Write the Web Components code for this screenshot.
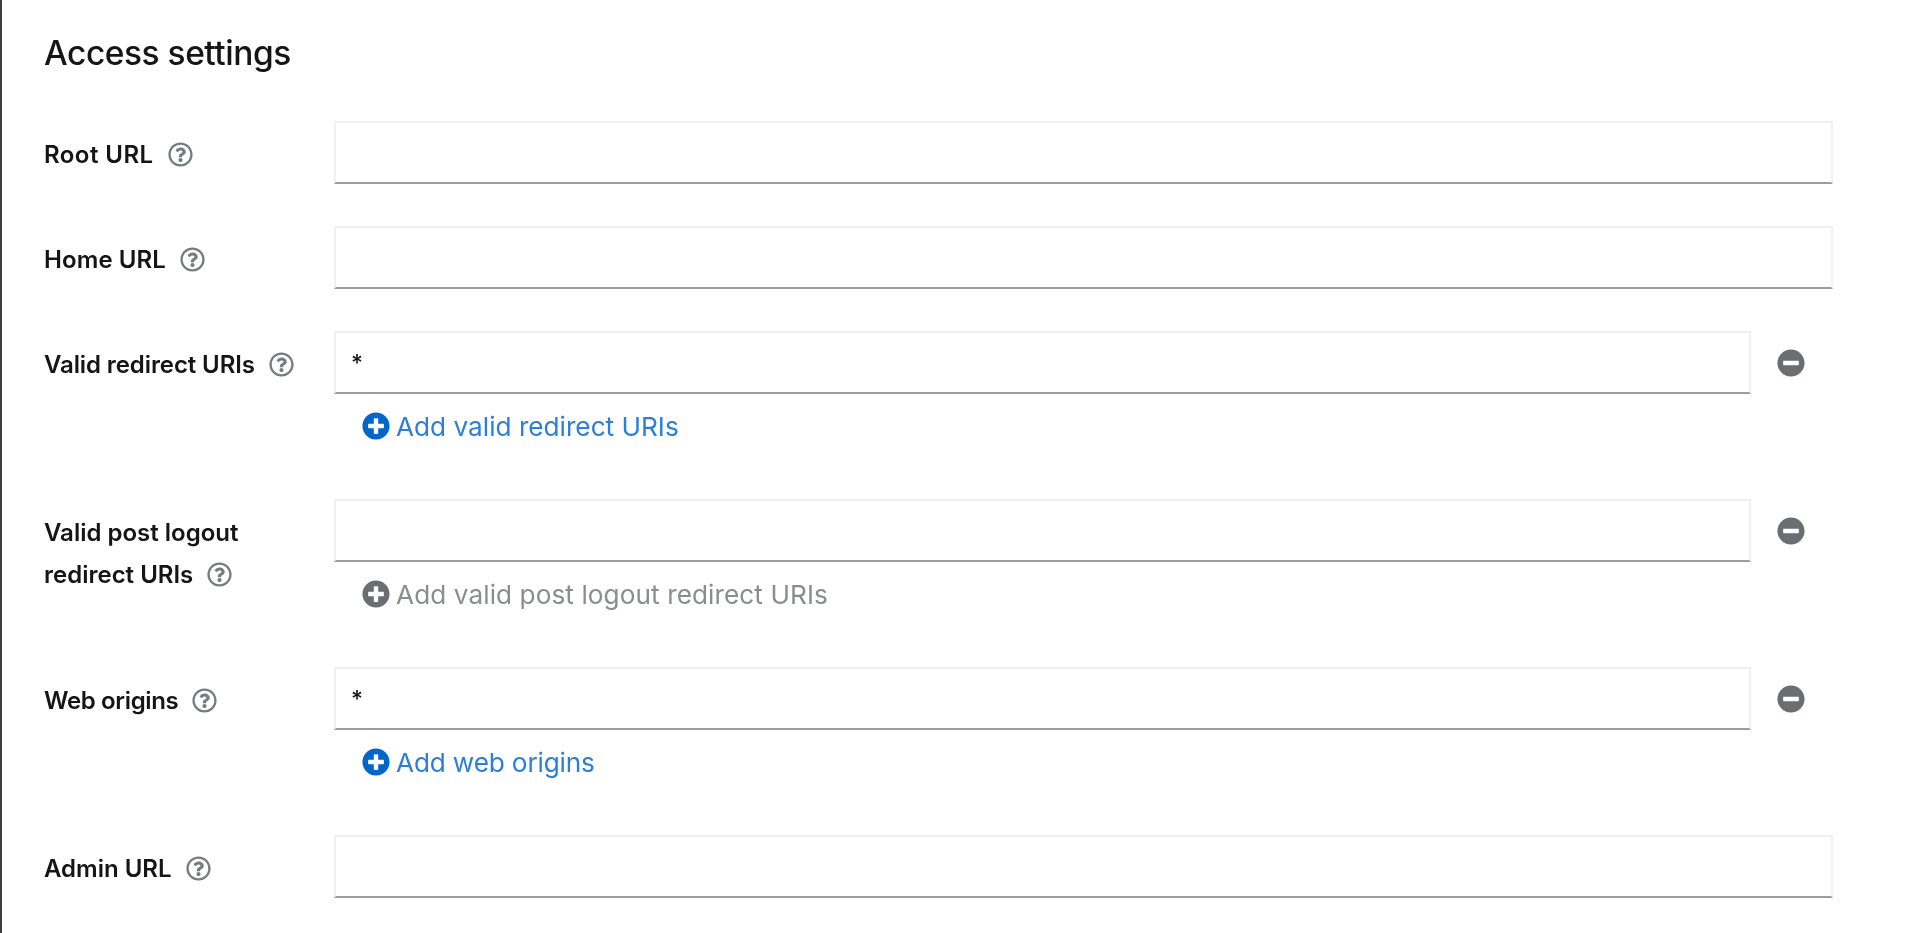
<!DOCTYPE html>
<html lang="en">
<head>
<meta charset="utf-8">
<title>Access settings</title>
<style>
    html, body { margin: 0; height: 100%; background: #fff; overflow: hidden; }
    body { font-family: Inter, "Noto Sans", sans-serif; color: #151515; }
</style>
</head>
<body>
<settings-page>
    <settings-section heading="Access settings">
        <form-row label="Root URL" style="--label-spacing: 0.45px"><text-field></text-field></form-row>
        <form-row label="Home URL" style="--label-spacing: 0.1px"><text-field></text-field></form-row>
        <form-row label="Valid redirect URIs" style="--label-spacing: -0.1px"><multi-field value="*" add="Add valid redirect URIs"></multi-field></form-row>
        <form-row label="Valid post logout redirect URIs" style="--add-spacing: 0.07px"><multi-field add="Add valid post logout redirect URIs" disabled></multi-field></form-row>
        <form-row label="Web origins" style="--label-spacing: -0.35px; --add-spacing: -0.16px"><multi-field value="*" add="Add web origins"></multi-field></form-row>
        <form-row label="Admin URL"><text-field></text-field></form-row>
    </settings-section>
</settings-page>

<script>
const ICONS = {
    help: 'M256 8C119.043 8 8 119.083 8 256c0 136.997 111.043 248 248 248s248-111.003 248-248C504 119.083 392.957 8 256 8zm0 448c-110.532 0-200-89.431-200-200 0-110.495 89.472-200 200-200 110.491 0 200 89.471 200 200 0 110.53-89.431 200-200 200zm107.244-255.2c0 67.052-72.421 68.084-72.421 92.863V300c0 6.627-5.373 12-12 12h-45.647c-6.627 0-12-5.373-12-12v-8.659c0-35.745 27.1-50.034 47.579-61.516 17.561-9.845 28.324-16.541 28.324-29.579 0-17.246-21.999-28.693-39.784-28.693-23.189 0-33.894 10.977-48.942 29.969-4.057 5.12-11.46 6.071-16.666 2.124l-27.824-21.098c-5.107-3.872-6.251-11.066-2.644-16.363C184.846 131.491 214.94 112 261.794 112c49.071 0 101.45 38.304 101.45 88.8zM298 368c0 23.159-18.841 42-42 42s-42-18.841-42-42 18.841-42 42-42 42 18.841 42 42z',
    plus: 'M256 8C119 8 8 119 8 256s111 248 248 248 248-111 248-248S393 8 256 8zm144 276c0 6.6-5.4 12-12 12h-92v92c0 6.6-5.4 12-12 12h-56c-6.6 0-12-5.4-12-12v-92h-92c-6.6 0-12-5.4-12-12v-56c0-6.6 5.4-12 12-12h92v-92c0-6.6 5.4-12 12-12h56c6.6 0 12 5.4 12 12v92h92c6.6 0 12 5.4 12 12v56z',
    minus: 'M256 8C119 8 8 119 8 256s111 248 248 248 248-111 248-248S393 8 256 8zM124 296c-6.6 0-12-5.4-12-12v-56c0-6.6 5.4-12 12-12h264c6.6 0 12 5.4 12 12v56c0 6.6-5.4 12-12 12H124z'
};

function icon(name, size) {
    return `<svg width="${size}" height="${size}" viewBox="0 0 512 512" fill="currentColor" aria-hidden="true"><path d="${ICONS[name]}"/></svg>`;
}

class SettingsPage extends HTMLElement {
    constructor() {
        super();
        this.attachShadow({ mode: 'open' }).innerHTML = `
            <style>
            :host {
                display: block;
                height: 933px;
                box-sizing: border-box;
                border-left: 2px solid #3c3f42;
                padding: 0 78px 0 42px;
                background: #fff;
                filter: blur(0.4px);
            }
            </style>
            <slot></slot>
        `;
    }
}

class SettingsSection extends HTMLElement {
    constructor() {
        super();
        this.attachShadow({ mode: 'open' }).innerHTML = `
            <style>
            :host {
                display: block;
            }

            h2 {
                margin: 0 0 47px;
                padding-top: 32px;
                font-size: 33.5px;
                font-weight: 450;
                letter-spacing: -0.47px;
                line-height: 42px;
            }

            .rows {
                display: flex;
                flex-direction: column;
                gap: 42px;
            }
            </style>
            <h2>${this.getAttribute('heading')}</h2>
            <div class="rows"><slot></slot></div>
        `;
    }
}

class FormRow extends HTMLElement {
    constructor() {
        super();
        this.attachShadow({ mode: 'open' }).innerHTML = `
            <style>
            :host {
                display: grid;
                grid-template-columns: 290px 1fr;
            }

            .label {
                padding: 13px 24px 0 0;
                font-size: 24px;
                font-weight: 600;
                letter-spacing: var(--label-spacing, 0);
                line-height: 42px;
            }

            .help {
                display: inline-block;
                margin-left: 8px;
                width: 25px;
                height: 25px;
                color: #777b80;
                letter-spacing: 0;
                vertical-align: -4px;
            }

            .help svg {
                display: block;
            }
            </style>
            <div class="label">${this.getAttribute('label')} <span class="help">${icon('help', 25)}</span></div>
            <div><slot></slot></div>
        `;
    }
}

class TextField extends HTMLElement {
    constructor() {
        super();
        this.attachShadow({ mode: 'open' }).innerHTML = `
            <style>
            :host {
                display: block;
            }

            input {
                display: block;
                width: 100%;
                height: 63px;
                box-sizing: border-box;
                padding: 0 15px;
                border: 2px solid #f0f0f0;
                border-bottom-color: #9a9da0;
                border-radius: 0;
                outline: none;
                background: #fff;
                color: #151515;
                font: 500 23px Inter, "Noto Sans", sans-serif;
            }
            </style>
            <input type="text">
        `;
        this.shadowRoot.querySelector('input').value = this.getAttribute('value') || '';
    }
}

class MultiField extends HTMLElement {
    constructor() {
        super();
        const disabled = this.hasAttribute('disabled');
        this.attachShadow({ mode: 'open' }).innerHTML = `
            <style>
            :host {
                display: block;
            }

            .line {
                display: flex;
                align-items: center;
            }

            text-field {
                flex: 1;
            }

            .remove {
                display: flex;
                justify-content: center;
                width: 82px;
                box-sizing: border-box;
                padding-right: 2px;
                color: #6a6e73;
            }

            .add {
                display: flex;
                align-items: center;
                gap: 6px;
                height: 63px;
                box-sizing: border-box;
                padding: 1px 0 0 28px;
                color: #0066cc;
                font-size: 26.2px;
                letter-spacing: var(--add-spacing, 0);
                line-height: 40px;
            }

            .add span {
                color: #2a7fd9;
                padding-top: 2px;
            }

            .add svg {
                display: block;
                flex: none;
            }

            .add.disabled {
                color: #6a6e73;
            }

            .add.disabled span {
                color: #8a8d90;
            }
            </style>
            <div class="line">
                <text-field value="${this.getAttribute('value') || ''}"></text-field>
                <div class="remove">${icon('minus', 28)}</div>
            </div>
            <div class="add${disabled ? ' disabled' : ''}">${icon('plus', 28)}<span>${this.getAttribute('add')}</span></div>
        `;
    }
}

customElements.define('text-field', TextField);
customElements.define('multi-field', MultiField);
customElements.define('form-row', FormRow);
customElements.define('settings-section', SettingsSection);
customElements.define('settings-page', SettingsPage);
</script>
</body>
</html>
